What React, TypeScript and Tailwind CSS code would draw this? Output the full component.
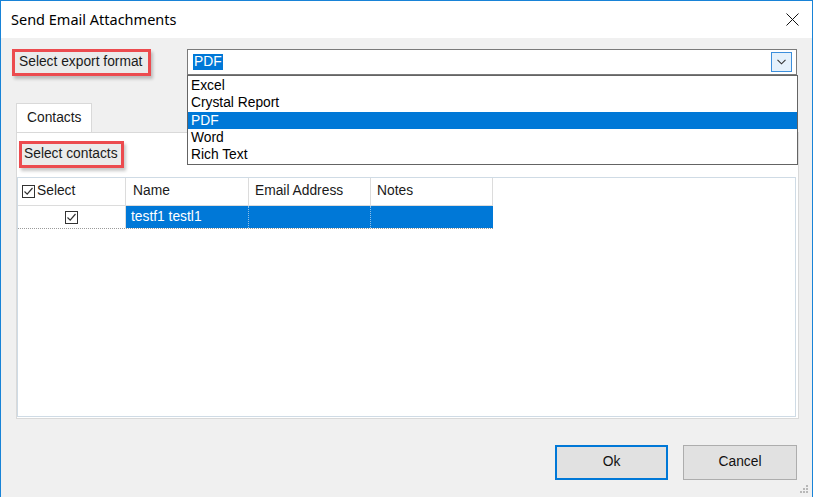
import { FC } from "react";

const CheckBox: FC = () => (
  <div className="w-[13px] h-[13px] border border-[#333333] bg-white flex items-center justify-center">
    <svg width="11" height="11" viewBox="0 0 11 11">
      <path d="M1.5 5.5 L4.2 8.2 L9.5 2" fill="none" stroke="#333333" strokeWidth="1.2" />
    </svg>
  </div>
);

const RedLabel: FC<{ text: string; box: string }> = ({ text, box }) => (
  <div
    className={`${box} h-[27px] border-[3px] border-[#ec4b4f] bg-[#ebebeb] shadow-[2px_3px_3px_rgba(0,0,0,0.22)] flex items-center text-[#1a1a1a] whitespace-nowrap`}
  >
    {text}
  </div>
);

const formats = ["Excel", "Crystal Report", "PDF", "Word", "Rich Text"];

export default function App() {
  return (
    <div className="w-[813px] h-[497px] bg-[#f0f0f0] border-x border-t border-[#1883d7] flex flex-col overflow-hidden font-['Liberation_Sans',Arial,sans-serif] text-[13.8px] text-black">
      {/* Title bar */}
      <div className="h-[37px] bg-white flex items-center pl-[10px] pr-[13px] shrink-0">
        <span className="font-['Noto_Sans',sans-serif] text-[14.5px] text-black">Send Email Attachments</span>
        <svg className="ml-auto" width="13" height="13" viewBox="0 0 13 13">
          <path d="M0.5 0.5 L12.5 12.5 M12.5 0.5 L0.5 12.5" stroke="#111" strokeWidth="1" />
        </svg>
      </div>

      <div className="relative flex-1 flex flex-col">
        {/* Export format row */}
        <div className="mt-[11px] ml-[11px] flex items-start">
          <RedLabel text="Select export format" box="w-[139px] pl-[4px]" />
          <div className="ml-[36px] w-[610px] h-[26px] border border-[#7a7a7a] bg-white flex items-center pl-[5px] pr-[4px]">
            <span className="bg-[#0078d7] text-white px-[1px] leading-[16px]">PDF</span>
            <div className="ml-auto w-[21px] h-[20px] border border-[#3c8fdc] bg-[#e5f1fb] flex items-center justify-center">
              <svg width="9" height="6" viewBox="0 0 9 6">
                <path d="M0.5 0.8 L4.5 4.8 L8.5 0.8" fill="none" stroke="#333" strokeWidth="1.1" />
              </svg>
            </div>
          </div>
        </div>

        {/* Tab strip */}
        <div className="mt-[27px] ml-[15px] flex">
          <div className="w-[76px] h-[29px] bg-white border-x border-t border-[#d9d9d9] flex items-center pl-[10px] text-[#1a1a1a]">
            Contacts
          </div>
        </div>

        {/* Tab panel */}
        <div className="ml-[15px] w-[783px] h-[287px] bg-white border border-[#d9d9d9] flex flex-col">
          <div className="mt-[8px] ml-[2px]">
            <RedLabel text="Select contacts" box="w-[105px] pl-[2px]" />
          </div>
          <div className="mt-[9px] w-[779px] h-[240px] border border-[#cfdbe5] bg-white flex flex-col">
            {/* Header */}
            <div className="flex h-[28px] text-[#1a1a1a]">
              <div className="w-[108px] border-r border-b border-[#dcdcdc] flex items-center pl-[4px] gap-[2px]">
                <CheckBox />
                <span>Select</span>
              </div>
              <div className="w-[123px] border-r border-b border-[#dcdcdc] flex items-center pl-[7px]">Name</div>
              <div className="w-[122px] border-r border-b border-[#dcdcdc] flex items-center pl-[6px]">Email Address</div>
              <div className="w-[122px] border-r border-b border-[#dcdcdc] flex items-center pl-[6px]">Notes</div>
            </div>
            {/* Row */}
            <div className="flex h-[23px] w-[475px] border-b border-dotted border-[#9a9a9a]">
              <div className="w-[108px] border-r border-[#dcdcdc] flex items-center justify-center">
                <CheckBox />
              </div>
              <div className="w-[123px] bg-[#0078d7] text-white border-r border-dotted border-[#8fbfe8] flex items-center pl-[5px]">
                testf1 testl1
              </div>
              <div className="w-[122px] bg-[#0078d7] border-r border-dotted border-[#8fbfe8]" />
              <div className="w-[122px] bg-[#0078d7]" />
            </div>
          </div>
        </div>

        {/* Buttons */}
        <div className="mt-[26px] ml-[554px] flex gap-[15px]">
          <button className="w-[113px] h-[35px] bg-[#e1e1e1] border-2 border-[#0078d7] text-[#111]">Ok</button>
          <button className="w-[114px] h-[35px] bg-[#e1e1e1] border border-[#adadad] text-[#111]">Cancel</button>
        </div>

        {/* Resize grip */}
        <svg className="absolute right-[3px] bottom-[3px]" width="9" height="9" viewBox="0 0 9 9">
          <g fill="#b8b8b8">
            <rect x="6" y="0" width="2" height="2" />
            <rect x="3" y="3" width="2" height="2" />
            <rect x="6" y="3" width="2" height="2" />
            <rect x="0" y="6" width="2" height="2" />
            <rect x="3" y="6" width="2" height="2" />
            <rect x="6" y="6" width="2" height="2" />
          </g>
        </svg>

        {/* Open dropdown list */}
        <div className="absolute top-[37px] left-[186px] w-[611px] h-[90px] bg-white border border-[#646464] pt-[1px]">
          {formats.map((f) => (
            <div
              key={f}
              className={`h-[17.4px] flex items-center pl-[3px] leading-none ${
                f === "PDF" ? "bg-[#0078d7] text-white" : "text-black"
              }`}
            >
              {f}
            </div>
          ))}
        </div>
      </div>
    </div>
  );
}
